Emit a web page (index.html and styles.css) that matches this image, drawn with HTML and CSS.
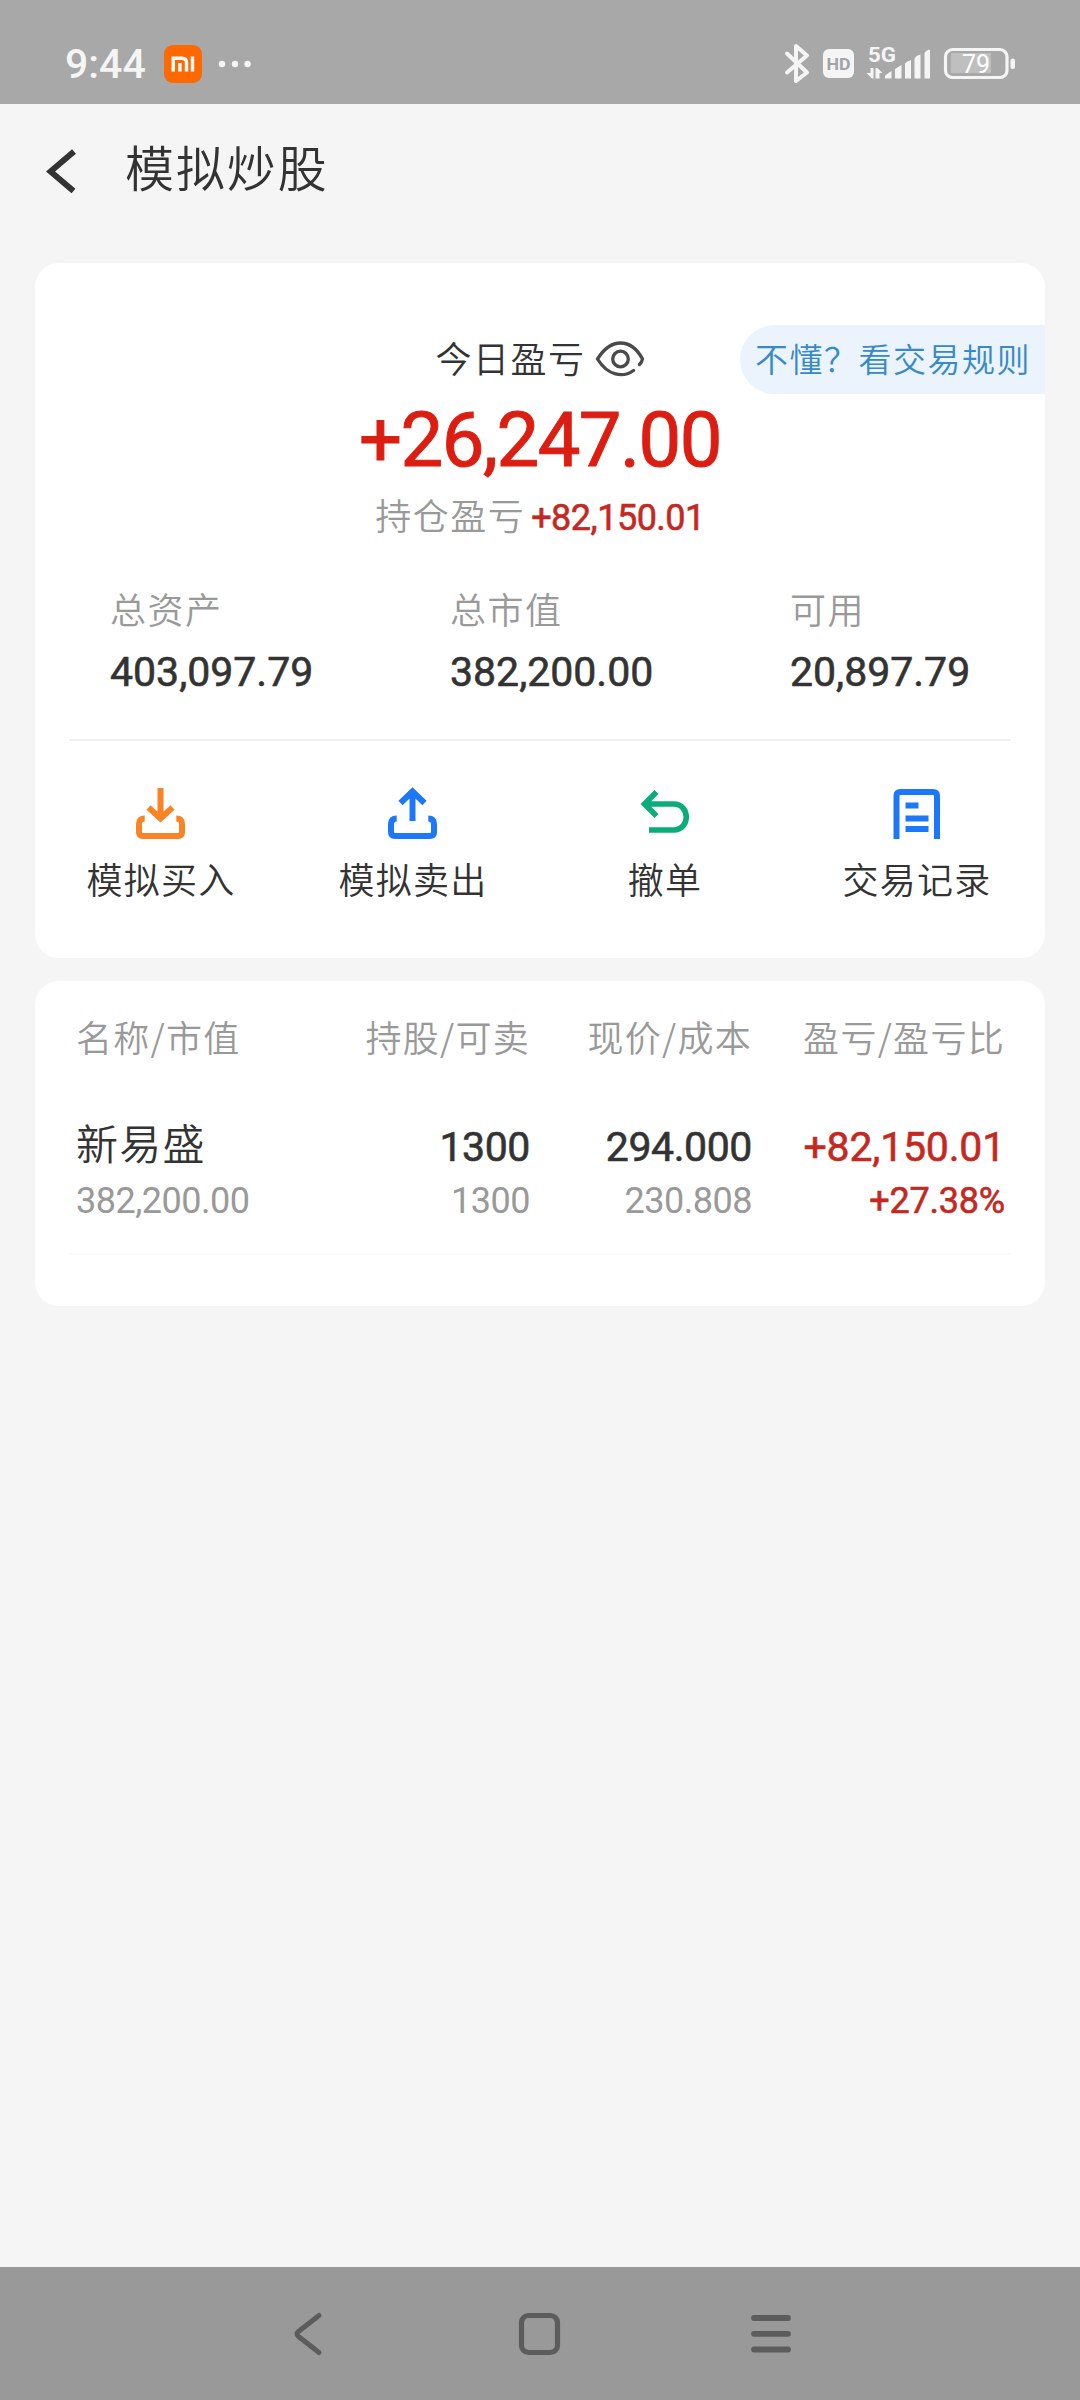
FILE: index.html
```html
<!DOCTYPE html>
<html lang="zh-CN">
<head>
<meta charset="utf-8">
<title>模拟炒股</title>
<link rel="stylesheet" href="styles.css">
</head>
<body>
<div class="screen">
  <div class="status">
    <span class="clock">9:44</span>
    <svg class="mi" width="38" height="38" viewBox="0 0 38 38"><rect width="38" height="38" rx="9" fill="#ff6900"/><g fill="none" stroke="#fff" stroke-width="3.4"><path d="M9.200 26.500V13.200H18q4.500 0 4.500 4.500V26.500M15.900 18V26.500M28.500 11.500V26.500"/></g></svg>
    <svg class="dots" width="34" height="8" viewBox="0 0 34 8" fill="#f5f5f5"><circle cx="4" cy="4" r="3.200"/><circle cx="17" cy="4" r="3.200"/><circle cx="29.500" cy="4" r="3.200"/></svg>
    <svg class="signals" width="232" height="40" viewBox="784 44 232 40">
      <path d="M787 53.500L807 72.500L796 81V46L807 55.500L787 72.500" fill="none" stroke="#f5f5f5" stroke-width="4" stroke-linejoin="round" stroke-linecap="round"/>
      <rect x="823" y="49" width="31" height="29" rx="6" fill="#f5f5f5"/>
      <text class="hd" x="838.500" y="69.500" text-anchor="middle" textLength="24" lengthAdjust="spacingAndGlyphs">HD</text>
      <text class="net" x="868" y="61.500" textLength="28" lengthAdjust="spacingAndGlyphs">5G</text>
      <g fill="#f5f5f5">
        <path d="M885 78.500V75.500L891.500 71V78.500ZM895 78.500V69L901.500 65V78.500ZM905 78.500V63.500Q907 61 911 60V78.500ZM914.500 78.500V58.500Q916 55.500 920.500 54.500V78.500ZM924.500 78.500V53Q926 50 930 49.500V78.500Z"/>
        <path d="M870.500 68H873.500V78.500H872L866.500 73H870.500ZM875.500 68H877.500L882.500 73H879.500V78.500H875.500Z"/>
        <rect x="1010.500" y="58.500" width="4.500" height="10.500" rx="2"/>
      </g>
      <rect x="951" y="53" width="40" height="20" fill="#bfbfbf"/>
      <rect x="945.500" y="49.500" width="61.500" height="28" rx="7" fill="none" stroke="#f5f5f5" stroke-width="3.200"/>
      <text class="pct" x="976" y="73" text-anchor="middle">79</text>
    </svg>
  </div>

  <header class="header">
    <svg width="32" height="44" viewBox="0 0 32 44"><path d="M28 2.500L4.500 22.500L27.500 42" fill="none" stroke="#333" stroke-width="6"/></svg>
    <h1>模拟炒股</h1>
  </header>

  <section class="card summary">
    <a class="rules">不懂？看交易规则</a>
    <div class="today">
      <span>今日盈亏</span>
      <svg width="50" height="38" viewBox="0 0 50 38" fill="none" stroke="#4a4a4a" stroke-width="3.300" stroke-linecap="round"><path d="M38.500 30.500C28 38 13 36 2.500 19C11 5.500 19 3 25.500 3C33 3 41 7 47.500 19Q47 22 44.500 24.500"/><circle cx="25.500" cy="19" r="7.800"/></svg>
    </div>
    <div class="big">+26,247.00</div>
    <div class="holding"><span>持仓盈亏</span><b>+82,150.01</b></div>
    <div class="stats">
      <div><span>总资产</span><b>403,097.79</b></div>
      <div><span>总市值</span><b>382,200.00</b></div>
      <div><span>可用</span><b>20,897.79</b></div>
    </div>
    <div class="rule"></div>
    <div class="actions">
      <a><svg width="54" height="54" viewBox="0 0 54 54" fill="none" stroke="#fa8325" stroke-width="6"><path d="M26.500 1V33M14.500 20.500L26.500 31.500L38.500 20.500M10.700 31.500Q5 31.500 5 37V45Q5 49 9 49H44Q48 49 48 45V37Q48 31.500 42.300 31.500"/></svg><span>模拟买入</span></a>
      <a><svg width="54" height="54" viewBox="0 0 54 54" fill="none" stroke="#1c78f8" stroke-width="6"><path d="M26.500 34V4M14.500 16L26.500 4.500L38.500 16M10.700 31.500Q5 31.500 5 37V45Q5 49 9 49H44Q48 49 48 45V37Q48 31.500 42.300 31.500"/></svg><span>模拟卖出</span></a>
      <a><svg width="54" height="54" viewBox="0 0 54 54" fill="none" stroke="#0aad79" stroke-width="5.600"><path d="M18.500 5L6.500 17L18.500 29M7 17H35.500C52.500 17 52.500 43 35.500 43H11"/></svg><span>撤单</span></a>
      <a><svg width="54" height="54" viewBox="0 0 54 54" fill="none" stroke="#1c78f8" stroke-width="6"><path d="M6.500 52V9Q6.500 5 10.500 5H43Q47 5 47 9V52M15.500 18.500H28.500M15.500 31.500H38.500M15.500 42H38.500"/></svg><span>交易记录</span></a>
    </div>
  </section>

  <section class="card positions">
    <div class="row head"><span>名称/市值</span><span>持股/可卖</span><span>现价/成本</span><span>盈亏/盈亏比</span></div>
    <div class="row item">
      <div><strong>新易盛</strong><small>382,200.00</small></div>
      <div><b>1300</b><small>1300</small></div>
      <div><b>294.000</b><small>230.808</small></div>
      <div class="up"><b>+82,150.01</b><small>+27.38%</small></div>
    </div>
    <div class="rule light"></div>
  </section>

  <nav class="nav">
    <svg width="60" height="48" viewBox="0 0 60 48"><path d="M40 5.500L19.500 21.500Q16.500 24 19.500 26.500L40 42.500" fill="none" stroke="#5c5c5c" stroke-width="5" stroke-linecap="round"/></svg>
    <svg width="60" height="48" viewBox="0 0 60 48"><rect x="11.500" y="5.500" width="36" height="37" rx="7" fill="none" stroke="#5c5c5c" stroke-width="5.200"/></svg>
    <svg width="60" height="48" viewBox="0 0 60 48"><path d="M13 8H47M13 23.800H47M13 39.500H47" fill="none" stroke="#5c5c5c" stroke-width="5.800" stroke-linecap="round"/></svg>
  </nav>
</div>
</body>
</html>
```
FILE: styles.css
```css
* { box-sizing: border-box; }
body { margin: 0; background: #f5f5f5; color: #333; font-family: "Noto Sans CJK SC", sans-serif; font-weight: 350; }
svg { display: block; flex: none; }
.screen { width: 1080px; height: 2400px; display: flex; flex-direction: column; }

.status { height: 104px; background: #a8a8a8; display: flex; align-items: center; padding: 24px 64px 0 65px; }
.clock { font: 500 41px/50px Roboto, sans-serif; color: #f5f5f5; width: 99px; }
.dots { margin-left: 16px; }
.signals { margin-left: auto; }
.hd { font: 700 17px Roboto, sans-serif; fill: #a3a3a3; }
.net { font: 700 21px Roboto, sans-serif; fill: #f5f5f5; }
.pct { font: 400 25px Roboto, sans-serif; fill: #fff; }

.header { height: 159px; display: flex; align-items: center; padding: 0 46px 26px; gap: 47px; }
h1 { margin: -10px 0 0; font-size: 49px; font-weight: 350; line-height: 70px; letter-spacing: 1.900px; }

.card { position: relative; margin: 0 35px; background: #fff; border-radius: 24px; display: flex; flex-direction: column; }
.summary { height: 695px; padding-top: 69px; }
.rules { position: absolute; right: 0; top: 62px; width: 305px; height: 69px; padding-left: 15px; border-radius: 35px 0 0 35px; background: #ebf3fc; color: #388ac6; font-size: 33px; line-height: 67px; letter-spacing: 1.500px; white-space: nowrap; }
.today { height: 50px; display: flex; justify-content: center; align-items: center; gap: 9px; font-size: 36px; line-height: 50px; letter-spacing: 1.500px; }
.today svg { margin-top: 4px; }
.big { margin-top: 18px; text-align: center; font: 400 76px/80px Roboto, sans-serif; letter-spacing: -1.500px; -webkit-text-stroke: 1px; color: #dc1e12; }
.holding { margin-top: 9px; height: 50px; display: flex; justify-content: center; gap: 6px; font-size: 36px; line-height: 50px; letter-spacing: 1.500px; color: #999; }
.holding b { font: 400 36px/59px Roboto, sans-serif; letter-spacing: -0.500px; -webkit-text-stroke: 0.600px; color: #c5281f; }

.stats { margin: 44px 0 0 75px; display: grid; grid-template-columns: repeat(3, 340px); }
.stats div { display: flex; flex-direction: column; gap: 14px; }
.stats span { font-size: 36px; line-height: 50px; letter-spacing: 1.500px; color: #999; }
.stats b { font: 400 41px/50px Roboto, sans-serif; -webkit-text-stroke: 0.600px; white-space: nowrap; }

.rule { height: 2px; margin: 42px 34px 0; background: #eee; flex: none; }
.rule.light { margin-top: 28px; background: #fafafa; }

.actions { margin-top: 46px; display: grid; grid-template-columns: repeat(4, 252px); }
.actions a { display: flex; flex-direction: column; align-items: center; gap: 14px; font-size: 36px; line-height: 46px; letter-spacing: 1.300px; }

.positions { margin-top: 23px; height: 325px; padding-top: 35px; }
.row { display: grid; grid-template-columns: 200px 254px 222px 253px; padding-left: 41px; text-align: right; }
.row > :first-child { text-align: left; }
.head { font-size: 36px; line-height: 40px; letter-spacing: 1.300px; color: #999; white-space: nowrap; }
.item { margin-top: 61px; }
.item div { display: flex; flex-direction: column; }
.item strong { font-size: 42px; line-height: 50px; margin-bottom: 11px; font-weight: 350; letter-spacing: 1.300px; }
.item b { font: 400 41px/61px Roboto, sans-serif; letter-spacing: -0.400px; -webkit-text-stroke: 0.600px; }
.item small { font: 400 36px/47px Roboto, sans-serif; letter-spacing: -0.500px; color: #999; }
.item .up b, .item .up small { color: #c5281f; letter-spacing: -0.200px; }
.item .up small { -webkit-text-stroke: 0.600px; }

.nav { margin-top: auto; height: 133px; background: #999; display: flex; justify-content: center; align-items: center; gap: 171px; }
```
